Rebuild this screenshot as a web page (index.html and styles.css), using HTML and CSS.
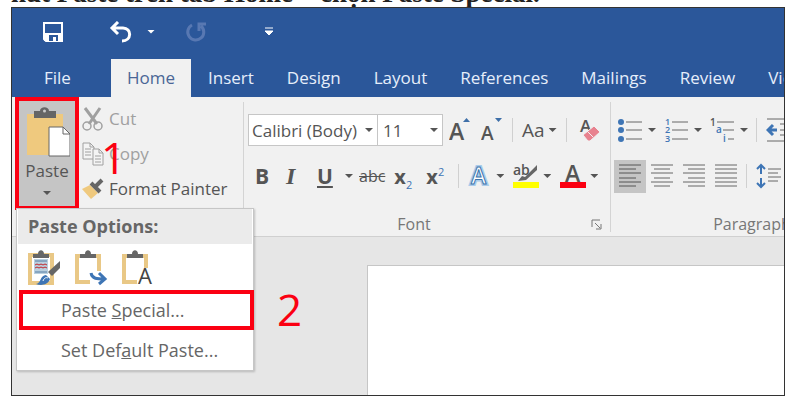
FILE: index.html
```html
<!DOCTYPE html>
<html lang="vi">
	<head>
		<meta charset="utf-8">
		<title>Paste Special</title>
		<link rel="stylesheet" href="styles.css">
	</head>

	<body>
		<p class="caption">nút Paste trên tab Home – chọn Paste Special.</p>

		<div class="window">
			<div class="title-bar">
				<button class="quick save" aria-label="Save">
					<svg width="22" height="22" viewBox="0 0 22 22"><path d="M2 2h18v18H4l-2-2z" fill="none" stroke="#fff" stroke-width="2"/><path d="M2 12h18v8H2z" fill="#fff"/><path d="M7 14h9v6h-2v-4h-3v4H7z" fill="#2b579a"/></svg>
				</button>
				<button class="quick undo" aria-label="Undo">
					<svg width="24" height="22" viewBox="0 0 24 22"><path d="M9 1L3 7l6 6M3 7h11c9 0 9 13-1 13" fill="none" stroke="#fff" stroke-width="3"/></svg>
				</button>
				<button class="quick more" aria-label="Undo list"><span class="arrow"></span></button>
				<button class="quick redo" aria-label="Repeat">
					<svg width="22" height="22" viewBox="0 0 22 22"><path d="M7 4a8 8 0 1 0 9 1M14 10V3h7" fill="none" stroke="#5878b2" stroke-width="3"/></svg>
				</button>
				<button class="quick custom" aria-label="Customize">
					<svg width="10" height="9" viewBox="0 0 10 9"><path d="M1 1h8M1 4h8L5 8z" fill="#fff" stroke="#fff" stroke-width="1"/></svg>
				</button>
			</div>

			<nav class="tabs">
				<a class="tab file" href="#">File</a>
				<a class="tab active" href="#">Home</a>
				<a class="tab" href="#">Insert</a>
				<a class="tab" href="#">Design</a>
				<a class="tab" href="#">Layout</a>
				<a class="tab" href="#">References</a>
				<a class="tab" href="#">Mailings</a>
				<a class="tab" href="#">Review</a>
				<a class="tab" href="#">View</a>
			</nav>

			<div class="ribbon">
				<section class="group clipboard">
					<button class="paste">
						<svg width="46" height="50" viewBox="0 0 46 50"><path d="M3 7h36v41H3z" fill="#efc97e"/><path d="M10 4h6c0-5 9-5 9 0h7v7H10z" fill="#666"/><circle cx="20.500" cy="4" r="1.500" fill="#ccc"/><path d="M25 20h14l7 7v22H25z" fill="#fff" stroke="#666"/><path d="M39 20v7h7" fill="none" stroke="#666"/></svg>
						<span>Paste</span>
						<span class="arrow"></span>
					</button>
					<div class="commands">
						<button class="command off">
							<svg width="22" height="24" viewBox="0 0 22 24"><path d="M3 1l12 16M18 1L7 17" fill="none" stroke="#a0a0a0" stroke-width="3"/><circle cx="5" cy="19" r="4" fill="none" stroke="#a0a0a0" stroke-width="1.500"/><circle cx="16" cy="19" r="4" fill="none" stroke="#a0a0a0" stroke-width="1.500"/></svg>
							Cut
						</button>
						<button class="command off">
							<svg width="22" height="24" viewBox="0 0 22 24"><path d="M1 1h7l4 4v12H1zM8 1v4h4M3 7h6M3 10h6M3 13h6" fill="#f4f4f4" stroke="#a0a0a0"/><path d="M11 7h6l4 4v12H11zM17 7v4h4M13 14h6M13 17h6M13 20h6" fill="#f4f4f4" stroke="#a0a0a0"/></svg>
							Copy
						</button>
						<button class="command">
							<svg width="22" height="22" viewBox="0 0 22 22"><path d="M0 11l8-4 8 8-7 6z" fill="#efc97e"/><path d="M9 5l9 9M13 9l7-7" fill="none" stroke="#666" stroke-width="4"/></svg>
							Format Painter
						</button>
					</div>
					<span class="step one">1</span>

					<div class="menu">
						<h2 class="menu-title">Paste Options:</h2>
						<div class="options">
							<button class="option" aria-label="Keep Source Formatting">
								<svg width="34" height="36" viewBox="0 0 34 36"><path d="M3 5h22v28H3z" fill="#fff" stroke="#e9c886" stroke-width="4"/><path d="M6 4h5c0-5 6-5 6 0h5v4H6z" fill="#666"/><path d="M7 9h14v15H7z" fill="#b9cfdf"/><path d="M8 11h12M8 22h12" stroke="#547da4"/><path d="M8 15l2-1 2 1 2-1 2 1 2-1 2 1M8 18l2-1 2 1 2-1 2 1 2-1 2 1" fill="none" stroke="#c3262b"/><path d="M33 11v7l-8 8-4-4z" fill="#666"/><path d="M9 34c5 0 4-9 10-9l4 4c-2 6-9 7-14 5z" fill="#3e75b5"/><path d="M16 31c1-3 3-4 5-3" stroke="#fff" fill="none"/></svg>
							</button>
							<button class="option" aria-label="Merge Formatting">
								<svg width="34" height="36" viewBox="0 0 34 36"><path d="M3 6h22v26H3z" fill="#fff" stroke="#e9c886" stroke-width="4"/><path d="M6 4h5c0-5 6-5 6 0h5v4H6z" fill="#666"/><path d="M16 21h17v15H16z" fill="#fff"/><path d="M17 23c1 6 6 6 14 6M25 23l6 6-6 5" fill="none" stroke="#3e75b5" stroke-width="3"/></svg>
							</button>
							<button class="option" aria-label="Keep Text Only">
								<svg width="34" height="36" viewBox="0 0 34 36"><path d="M3 6h22v26H3z" fill="#fff" stroke="#e9c886" stroke-width="4"/><path d="M6 4h5c0-5 6-5 6 0h5v4H6z" fill="#666"/><path d="M16 18h16v18H16z" fill="#fff"/><text x="17" y="34" class="glyph" font-size="22" fill="#444">A</text></svg>
							</button>
						</div>
						<button class="item chosen">Paste <u>S</u>pecial...</button>
						<button class="item">Set Def<u>a</u>ult Paste...</button>
						<span class="step two">2</span>
					</div>
				</section>

				<section class="group font">
					<div class="row first">
						<div class="boxes">
							<label class="box name"><input type="text" value="Calibri (Body)" aria-label="Font"><span class="arrow"></span></label>
							<label class="box size"><input type="text" value="11" aria-label="Font size"><span class="arrow"></span></label>
						</div>
						<button class="tool" aria-label="Grow font"><svg width="22" height="24" viewBox="0 0 22 24"><text x="0" y="22" class="glyph bold" font-size="23">A</text><path d="M14 4h7l-3.500-4z" fill="#3e6fa8"/></svg></button>
						<button class="tool grow" aria-label="Shrink font"><svg width="22" height="24" viewBox="0 0 22 24"><text x="0" y="22" class="glyph bold" font-size="19">A</text><path d="M14 0h7l-3.500 4z" fill="#3e6fa8"/></svg></button>
						<span class="line"></span>
						<button class="tool case">Aa<span class="arrow"></span></button>
						<span class="line"></span>
						<button class="tool clear" aria-label="Clear formatting"><svg width="24" height="24" viewBox="0 0 24 24"><text x="2" y="14" class="glyph bold" font-size="17">A</text><path d="M5 17L16 8l6 6-10 9h-2z" fill="#e8828f" stroke="#f1f1f1"/><path d="M9 13l6 6" stroke="#f1f1f1"/></svg></button>
					</div>
					<div class="row second">
						<button class="tool letter"><b>B</b></button>
						<button class="tool letter italic"><b><i>I</i></b></button>
						<button class="tool letter"><b><u>U</u></b></button>
						<button class="tool" aria-label="Underline style"><span class="arrow"></span></button>
						<button class="tool strike"><s>abc</s></button>
						<button class="tool script"><b>x</b><sub>2</sub></button>
						<button class="tool script"><b>x</b><sup>2</sup></button>
						<span class="line"></span>
						<button class="tool pick" aria-label="Text effects"><svg width="24" height="26" viewBox="0 0 24 26"><text x="3" y="21" class="glyph bold" font-size="23" fill="#fff" stroke="#a9cbea" stroke-width="4">A</text><text x="3" y="21" class="glyph bold" font-size="23" fill="#fff" stroke="#3d74ac" stroke-width="1">A</text></svg><span class="arrow"></span></button>
						<button class="tool pick" aria-label="Highlight"><svg width="26" height="26" viewBox="0 0 26 26"><text x="0" y="12" class="glyph bold" font-size="14">ab</text><path d="M24 2v5L13 17l-8 1 4-5 3 1z" fill="#666"/><path d="M0 19h26v6H0z" fill="#ff0"/></svg><span class="arrow"></span></button>
						<button class="tool pick" aria-label="Font color"><svg width="26" height="26" viewBox="0 0 26 26"><text x="5" y="19" class="glyph bold" font-size="23">A</text><path d="M0 19h26v6H0z" fill="#fb0012"/></svg><span class="arrow"></span></button>
					</div>
					<div class="group-name">
						<span>Font</span>
						<button class="launcher" aria-label="Font settings"><svg width="11" height="11" viewBox="0 0 11 11"><path d="M1 8V1h8M4 4l5 5M10 5v5H5" fill="none" stroke="#777"/></svg></button>
					</div>
				</section>

				<section class="group paragraph">
					<div class="row first">
						<button class="tool list" aria-label="Bullets"><svg width="24" height="24" viewBox="0 0 24 24"><path d="M8 4h16M8 12h16M8 21h16" stroke="#666"/><g fill="#3e75b5"><circle cx="3" cy="4" r="3"/><circle cx="3" cy="12" r="3"/><circle cx="3" cy="21" r="3"/></g></svg><span class="arrow"></span></button>
						<button class="tool list" aria-label="Numbering"><svg width="24" height="24" viewBox="0 0 24 24"><path d="M8 4h16M8 12h16M8 21h16" stroke="#666"/><g class="glyph bold" font-size="9" fill="#3e75b5"><text x="1" y="7">1</text><text x="1" y="15">2</text><text x="1" y="24">3</text></g></svg><span class="arrow"></span></button>
						<button class="tool list" aria-label="Multilevel list"><svg width="24" height="24" viewBox="0 0 24 24"><path d="M7 4h17M13 12h11M18 21h6" stroke="#666"/><g class="glyph bold" font-size="10"><text x="0" y="8" fill="#555">1</text><text x="6" y="15" fill="#3e75b5">a</text><text x="13" y="24" fill="#3e75b5">i</text></g></svg><span class="arrow"></span></button>
						<span class="line"></span>
						<button class="tool" aria-label="Decrease indent"><svg width="26" height="24" viewBox="0 0 26 24"><path d="M1 1h25M14 6h12M14 12h12M14 17h12M1 23h25" stroke="#666"/><path d="M11 12H2M7 7l-5 5 5 5" fill="none" stroke="#3e75b5" stroke-width="3"/></svg></button>
					</div>
					<div class="row second">
						<button class="tool align on" aria-label="Align left"><svg width="22" height="24" viewBox="0 0 22 24"><path d="M0 1h22M0 5h17M0 9h22M0 14h17M0 18h22M0 22h17" stroke="#555"/></svg></button>
						<button class="tool align" aria-label="Center"><svg width="22" height="24" viewBox="0 0 22 24"><path d="M0 1h22M3 5h16M0 9h22M3 14h16M0 18h22M3 22h16" stroke="#666"/></svg></button>
						<button class="tool align" aria-label="Align right"><svg width="22" height="24" viewBox="0 0 22 24"><path d="M0 1h22M5 5h17M0 9h22M5 14h17M0 18h22M5 22h17" stroke="#666"/></svg></button>
						<button class="tool align" aria-label="Justify"><svg width="22" height="24" viewBox="0 0 22 24"><path d="M0 1h22M0 5h22M0 9h22M0 14h22M0 18h22M0 22h22" stroke="#666"/></svg></button>
						<span class="line"></span>
						<button class="tool spacing" aria-label="Line spacing"><svg width="26" height="26" viewBox="0 0 26 26"><path d="M5 2v9M1 6l4-4 4 4M5 15v9M1 20l4 4 4-4" fill="none" stroke="#3e75b5" stroke-width="2"/><path d="M12 6h13M12 10h10M12 14h13M12 18h10" stroke="#666"/></svg></button>
					</div>
					<div class="group-name"><span>Paragraph</span></div>
				</section>
			</div>

			<main class="desk">
				<div class="sheet"></div>
			</main>
		</div>
	</body>
</html>
```
FILE: styles.css
```css
* {
	box-sizing: border-box;
}

body {
	display: flex;
	flex-direction: column;
	height: 100vh;
	margin: 0;
	overflow: hidden;
	background: #fff;
	font-family: "Open Sans", "Noto Sans", sans-serif;
	font-size: 17px;
	color: #555;
}

button {
	display: flex;
	align-items: center;
	padding: 0;
	border: none;
	background: none;
	font: inherit;
	color: inherit;
	white-space: nowrap;
}

svg {
	display: block;
	flex: none;
	fill: #555;
}

/* only the foot of the text line stays in view */
.caption {
	display: flex;
	align-items: flex-end;
	flex: none;
	height: 7px;
	margin: 0 11px;
	overflow: hidden;
	font-family: "Liberation Serif", serif;
	font-size: 27px;
	font-weight: bold;
	line-height: 28px;
	color: #222;
	white-space: nowrap;
}

.window {
	display: flex;
	flex-direction: column;
	flex: 1;
	margin: 0 3px 4px 11px;
	overflow: hidden;
	border: 1px solid #333;
	background: #e6e6e6;
}

.arrow {
	width: 8px;
	height: 4px;
	background: currentColor;
	clip-path: polygon(0 0, 100% 0, 50% 100%);
}

/* title bar */
.title-bar {
	display: flex;
	align-items: center;
	flex: none;
	height: 51px;
	padding: 0 0 4px 30px;
	background: #2b579a;
	color: #fff;
}

.undo {
	margin-left: 45px;
}

.more {
	margin-left: 14px;
}

.redo {
	margin-left: 30px;
}

.custom {
	margin-left: 57px;
}

/* tabs */
.tabs {
	display: flex;
	flex: none;
	height: 38px;
	overflow: hidden;
	background: #2b579a;
}

.tab {
	flex: none;
	padding: 0 16px 0 17px;
	line-height: 38px;
	color: #e6eefa;
	text-decoration: none;
}

.file {
	padding: 0 40px 0 32px;
}

.active {
	padding: 0 16px;
	background: #f1f1f1;
	color: #4a6696;
}

/* ribbon */
.ribbon {
	display: flex;
	flex: none;
	height: 140px;
	border-bottom: 1px solid #d0d0d0;
	background: #f1f1f1;
}

.group {
	position: relative;
	flex: none;
}

.group + .group::before {
	content: "";
	position: absolute;
	top: 5px;
	bottom: 4px;
	left: 0;
	border-left: 1px solid #d4d4d4;
}

.clipboard {
	display: flex;
	width: 231px;
	padding-left: 3px;
}

.paste {
	flex-direction: column;
	width: 64px;
	height: 113px;
	padding-top: 6px;
	border: 4px solid #fb0012;
	background: #c5c5c5;
}

.paste svg {
	margin-bottom: 2px;
}

.paste .arrow {
	margin-top: 9px;
}

.commands {
	padding: 4px 0 0 3px;
}

.command {
	gap: 5px;
	height: 35px;
}

.off {
	color: #a0a0a0;
}

.step {
	position: absolute;
	font-size: 44px;
	line-height: 44px;
	color: #fb0012;
}

.one {
	top: 38px;
	left: 89px;
}

.two {
	top: 78px;
	left: 260px;
}

/* paste menu */
.menu {
	position: absolute;
	top: 111px;
	left: 4px;
	z-index: 1;
	width: 238px;
	border: 1px solid #c6c6c6;
	background: #fff;
	box-shadow: 1px 1px 2px rgba(0, 0, 0, 0.2);
}

.menu-title {
	margin: 0 1px;
	padding-left: 10px;
	background: #ebebeb;
	font-size: 18px;
	line-height: 35px;
	color: #666;
}

.options {
	display: flex;
	gap: 13px;
	padding: 6px 0 4px 10px;
}

.item {
	display: block;
	width: 100%;
	height: 40px;
	padding-left: 44px;
	font-size: 18px;
	text-align: left;
	color: #666;
}

.chosen {
	width: 235px;
	margin-left: 2px;
	padding-left: 38px;
	border: 4px solid #fb0012;
}

/* font group */
.font {
	width: 367px;
	padding-left: 5px;
}

.row {
	display: flex;
	align-items: center;
}

.first {
	height: 32px;
	margin-top: 17px;
}

.second {
	height: 34px;
	margin-top: 13px;
}

.boxes {
	display: flex;
	margin-right: 6px;
}

.box {
	display: flex;
	align-items: center;
	height: 32px;
	padding: 0 4px 0 3px;
	border: 1px solid #c6c6c6;
	background: #fff;
}

.box + .box {
	border-left: none;
}

.box input {
	flex: 1;
	min-width: 0;
	padding: 0;
	border: none;
	outline: none;
	background: none;
	font: inherit;
	color: inherit;
}

.name {
	width: 130px;
}

.size {
	width: 65px;
	padding-left: 5px;
}

.glyph {
	font-family: "Open Sans", sans-serif;
}

.bold {
	font-weight: 600;
}

.tool .arrow {
	margin-left: 4px;
}

.grow {
	margin-left: 10px;
}

.line {
	height: 24px;
	margin: 0 9px;
	border-left: 1px solid #d0d0d0;
}

.case {
	font-size: 19px;
}

.clear {
	margin-left: 2px;
}

.letter {
	width: 31px;
	padding-left: 7px;
	font-size: 21px;
}

.italic {
	font-family: "Liberation Serif", serif;
	font-size: 24px;
}

.strike {
	margin-left: 6px;
	font-size: 16px;
}

.script {
	display: block;
	width: 32px;
	padding-left: 9px;
	font-size: 20px;
	text-align: left;
}

.script sub,
.script sup {
	font-size: 11px;
	line-height: 0;
	color: #3e75b5;
}

.pick {
	margin-right: 9px;
}

.group-name {
	display: flex;
	align-items: center;
	justify-content: center;
	margin-top: 17px;
	font-size: 16px;
	line-height: 28px;
	color: #777;
}

.font .group-name {
	padding-right: 30px;
}

.launcher {
	position: absolute;
	right: 8px;
}

/* paragraph group */
.paragraph {
	width: 280px;
	padding-left: 4px;
}

.paragraph .first {
	padding-left: 4px;
}

.list {
	margin-right: 8px;
}

.list .arrow {
	margin-left: 6px;
}

.list + .line {
	margin-left: 0;
}

.align {
	justify-content: center;
	width: 32px;
	height: 33px;
}

.align + .line {
	margin-left: 4px;
}

.on {
	background: #c5c5c5;
}

/* document */
.desk {
	display: flex;
	flex: 1;
	padding: 28px 0 0 355px;
}

.sheet {
	flex: 1;
	border: solid #c6c6c6;
	border-width: 1px 0 0 1px;
	background: #fff;
}
```
